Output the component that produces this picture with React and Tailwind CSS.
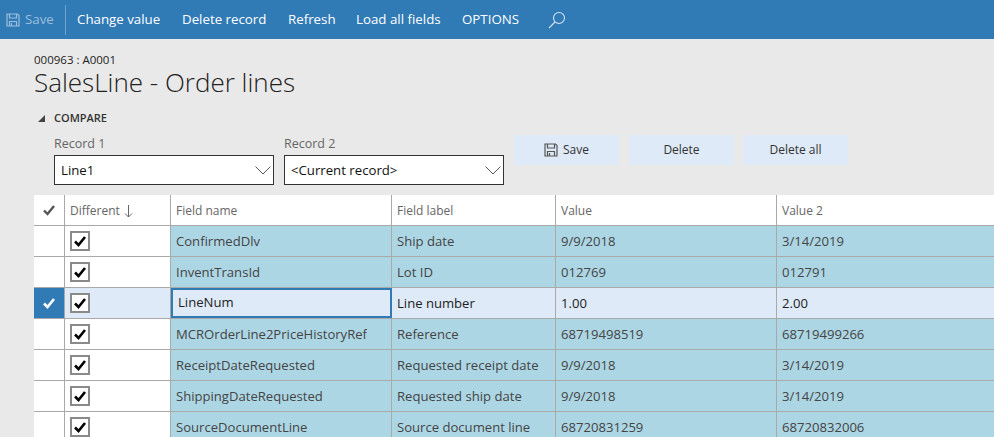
const rows = [
  ["ConfirmedDlv", "Ship date", "9/9/2018", "3/14/2019"],
  ["InventTransId", "Lot ID", "012769", "012791"],
  ["LineNum", "Line number", "1.00", "2.00"],
  ["MCROrderLine2PriceHistoryRef", "Reference", "68719498519", "68719499266"],
  ["ReceiptDateRequested", "Requested receipt date", "9/9/2018", "3/14/2019"],
  ["ShippingDateRequested", "Requested ship date", "9/9/2018", "3/14/2019"],
  ["SourceDocumentLine", "Source document line", "68720831259", "68720832006"],
];

const grid = "grid grid-cols-[31px_106px_221px_164px_221px_1fr] h-[31px] border-b border-[#a9a9a9]";

function SaveIcon({ color }) {
  return (
    <svg width="14" height="14" viewBox="0 0 14 14" fill="none" stroke={color} strokeWidth="1.2">
      <path d="M1 1h10.5L13 2.5V13H1z" />
      <path d="M3.5 1v4h7V1M3.5 13V8.5h7V13M5.5 10v3" />
    </svg>
  );
}

function Tick({ color = "#000", size = 14, width = 2.6 }) {
  return (
    <svg width={size} height={size} viewBox="0 0 14 14" fill="none" stroke={color} strokeWidth={width}>
      <path d="M2 7.5l3.5 3.5L12 3" />
    </svg>
  );
}

function Chevron() {
  return (
    <svg width="16" height="9" viewBox="0 0 16 9" fill="none" stroke="#555" strokeWidth="1">
      <path d="M.5.5L8 8 15.5.5" />
    </svg>
  );
}

function Select({ label, value }) {
  return (
    <div className="w-[220px]">
      <div className="h-[22px] pt-[1px] text-[12.5px] leading-[20px] text-[#666]">{label}</div>
      <div className="h-[30px] bg-white border border-[#333] flex items-center justify-between pl-[6px] pr-[2px] text-[13.2px] text-[#111]">
        <span className="pt-[2px]">{value}</span>
        <Chevron />
      </div>
    </div>
  );
}

function ActionButton({ children }) {
  return (
    <div className="w-[105px] h-[30px] bg-[#deeaf7] flex items-center justify-center gap-[5px] text-[12px] font-medium text-[#333]">
      {children}
    </div>
  );
}

function Checkbox() {
  return (
    <div className="w-[20px] h-[20px] border-2 border-[#8a8a8a] bg-white flex items-center justify-center">
      <Tick size={14} />
    </div>
  );
}

export default function App() {
  return (
    <div className="w-[994px] h-[437px] overflow-hidden bg-[#e9e9e9] font-['Open_Sans',sans-serif]">
      <div className="h-[39px] bg-[#307ab6] flex items-center text-white text-[13.3px]">
        <div className="w-[65px] flex items-center pl-[6px] gap-[5px] text-[#9dbfdc]">
          <SaveIcon color="#9dbfdc" />
          <span>Save</span>
        </div>
        <div className="w-px h-[30px] bg-[#6fa2cc]" />
        <div className="w-[116px] pl-[11px]">Change value</div>
        <div className="w-[106px]">Delete record</div>
        <div className="w-[68px]">Refresh</div>
        <div className="w-[106px]">Load all fields</div>
        <div className="w-[86px]">OPTIONS</div>
        <svg width="18" height="18" viewBox="0 0 18 18" fill="none" stroke="#d5e4f1" strokeWidth="1.1">
          <circle cx="11" cy="7" r="5.5" />
          <path d="M7 11l-6 6" />
        </svg>
      </div>

      <div className="pl-[34px] pt-[14px] text-[#333]">
        <div className="h-[14px] text-[11.5px] leading-[14px] text-[#222]">000963 : A0001</div>
        <div className="h-[35px] text-[26px] leading-[30px] font-light text-[#222]">SalesLine - Order lines</div>
        <div className="h-[29px] flex items-center gap-[8px] mt-[2px] text-[11px] font-semibold text-[#333]">
          <svg width="8" height="8" viewBox="0 0 8 8" className="ml-[4px]"><path d="M0 7h7V0z" fill="#444" /></svg>
          <span>COMPARE</span>
        </div>
        <div className="h-[52px] flex pl-[20px] gap-[10px]">
          <Select label="Record 1" value="Line1" />
          <Select label="Record 2" value="<Current record>" />
          <div className="flex gap-[10px] pl-[1px] pt-[2px] [&>*:last-child]:ml-[-1px] ml-[-1px]">
            <ActionButton><SaveIcon color="#555" /><span>Save</span></ActionButton>
            <ActionButton>Delete</ActionButton>
            <ActionButton>Delete all</ActionButton>
          </div>
        </div>
      </div>

      <div className="ml-[34px] mt-[10px] bg-white">
        <div className={`${grid} text-[12px] text-[#666]`}>
          <div className="flex items-center justify-center border-r border-[#a9a9a9]">
            <Tick color="#555" size={14} width={2.4} />
          </div>
          <div className="flex items-center gap-[4px] pl-[5px] pt-[2px] border-r border-[#a9a9a9]">
            <span>Different</span>
            <svg width="9" height="13" viewBox="0 0 9 13" fill="none" stroke="#666" strokeWidth="1">
              <path d="M4.5 0v12M1 8.5L4.5 12 8 8.5" />
            </svg>
          </div>
          <div className="flex items-center pl-[5px] pt-[2px] border-r border-[#a9a9a9]">Field name</div>
          <div className="flex items-center pl-[5px] pt-[2px] border-r border-[#a9a9a9]">Field label</div>
          <div className="flex items-center pl-[5px] pt-[2px] border-r border-[#a9a9a9]">Value</div>
          <div className="flex items-center pl-[5px] pt-[2px]">Value 2</div>
        </div>
        {rows.map((r) => {
          const selected = r[0] === "LineNum";
          const bg = selected ? "bg-[#deeaf7] text-[#222]" : "bg-[#add6e4] text-[#444]";
          return (
            <div key={r[0]} className={`${grid} text-[13.1px]`}>
              <div className={`flex items-center justify-center border-r border-[#a9a9a9] ${selected ? "bg-[#307ab6]" : "bg-white"}`}>
                {selected && <Tick color="#fff" size={14} />}
              </div>
              <div className={`flex items-center pl-[5px] border-r border-[#a9a9a9] ${selected ? "bg-[#deeaf7]" : "bg-white"}`}>
                <Checkbox />
              </div>
              <div className={`flex items-center ${bg} ${selected ? "border-2 border-[#307ab6] pl-[5px]" : "pl-[5px] pt-[2px] border-r border-[#a9a9a9]"}`}>
                <span className="truncate">{r[0]}</span>
              </div>
              <div className={`flex items-center pl-[5px] pt-[2px] border-r border-[#a9a9a9] ${bg}`}>{r[1]}</div>
              <div className={`flex items-center pl-[5px] pt-[2px] border-r border-[#a9a9a9] ${bg}`}>{r[2]}</div>
              <div className={`flex items-center pl-[5px] pt-[2px] ${bg}`}>{r[3]}</div>
            </div>
          );
        })}
      </div>
    </div>
  );
}
